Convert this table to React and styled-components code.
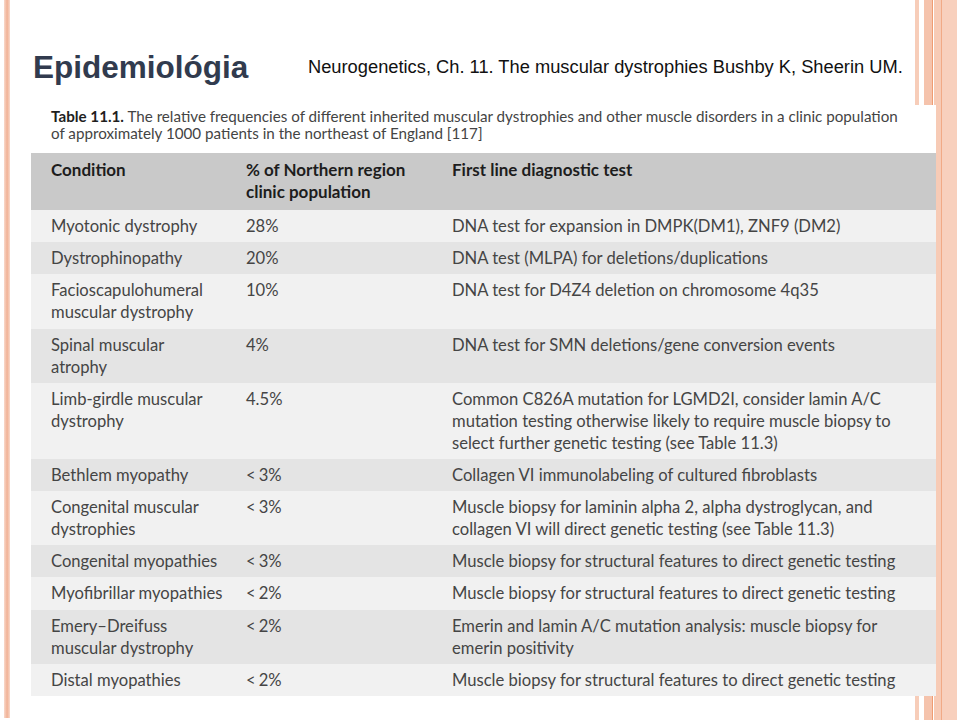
import React from 'react';
import styled, { createGlobalStyle } from 'styled-components';

const GlobalStyle = createGlobalStyle`
  html, body {
    margin: 0;
    padding: 0;
    background: #ffffff;
  }
`;

const Slide = styled.div`
  position: relative;
  width: 960px;
  height: 720px;
  overflow: hidden;
  background: #ffffff;
  display: flex;
  flex-direction: column;
`;

/* decorative frame lines of the slide template */
const LeftRule = styled.div`
  position: absolute;
  left: 4px;
  top: 0;
  width: 6px;
  height: 718px;
  background: linear-gradient(90deg, #f9d9cb 0%, #f2b79d 45%, #f2b79d 60%, #f9d9cb 100%);
`;

const Stripe = styled.div`
  position: absolute;
  top: 0;
  bottom: 0;
  left: ${({ $x }) => $x}px;
  width: ${({ $w }) => $w}px;
  background: ${({ $bg }) => $bg};
  border-right: ${({ $line }) => ($line ? `1px solid ${$line}` : 'none')};
`;

const Header = styled.header`
  position: relative;
  z-index: 1;
  box-sizing: border-box;
  height: 105px;
  padding: 51px 0 0 33px;
  display: grid;
  grid-template-columns: 275px auto;
  align-items: start;
`;

const Title = styled.h1`
  margin: 0;
  font-family: "Liberation Sans", Arial, sans-serif;
  font-weight: 700;
  font-size: 31.5px;
  line-height: 32px;
  color: #313b4e;
  white-space: nowrap;
`;

const Citation = styled.p`
  margin: 7px 0 0;
  font-family: "Liberation Sans", Arial, sans-serif;
  font-size: 18.3px;
  line-height: 18px;
  color: #111111;
  white-space: nowrap;
`;

const Figure = styled.figure`
  position: relative;
  z-index: 1;
  margin: 0 0 0 31px;
  width: 905px;
  background: #ffffff;
  padding-top: 3px;
  font-family: Lato, "Open Sans", sans-serif;
`;

const Caption = styled.figcaption`
  padding: 0 0 11px 20px;
  font-size: 15.2px;
  line-height: 17px;
  color: #444444;
  white-space: nowrap;

  b {
    color: #1f1f1f;
    font-weight: 700;
  }
`;

const Grid = styled.div`
  display: flex;
  flex-direction: column;
`;

const Row = styled.div`
  display: grid;
  grid-template-columns: 195px 206px 1fr;
  background: ${({ $tone }) =>
    $tone === 'head' ? '#c9c9c9' : $tone === 'dark' ? '#e4e4e4' : '#f1f1f1'};
  padding: ${({ $tone }) => ($tone === 'head' ? '6px 0 7px' : '5px 0')};
`;

const Cell = styled.div`
  padding-left: 20px;
  font-size: ${({ $head }) => ($head ? '17px' : '16.6px')};
  line-height: 22.1px;
  color: ${({ $head }) => ($head ? '#1d1d1d' : '#454545')};
  font-weight: ${({ $head }) => ($head ? 700 : 400)};
  white-space: nowrap;
`;

const Less = styled.span`
  margin-right: 3px;
`;

const Line = styled.div``;

const biopsy = 'Muscle biopsy for structural features to direct genetic testing';

const rows = [
  { cond: ['Myotonic dystrophy'], pct: '28%', test: ['DNA test for expansion in DMPK(DM1), ZNF9 (DM2)'] },
  { cond: ['Dystrophinopathy'], pct: '20%', test: ['DNA test (MLPA) for deletions/duplications'] },
  { cond: ['Facioscapulohumeral', 'muscular dystrophy'], pct: '10%', test: ['DNA test for D4Z4 deletion on chromosome 4q35'] },
  { cond: ['Spinal muscular', 'atrophy'], pct: '4%', test: ['DNA test for SMN deletions/gene conversion events'] },
  {
    cond: ['Limb-girdle muscular', 'dystrophy'],
    pct: '4.5%',
    test: [
      'Common C826A mutation for LGMD2I, consider lamin A/C',
      'mutation testing otherwise likely to require muscle biopsy to',
      'select further genetic testing (see Table 11.3)',
    ],
  },
  { cond: ['Bethlem myopathy'], pct: '<3%', test: ['Collagen VI immunolabeling of cultured fibroblasts'] },
  {
    cond: ['Congenital muscular', 'dystrophies'],
    pct: '<3%',
    test: [
      'Muscle biopsy for laminin alpha 2, alpha dystroglycan, and',
      'collagen VI will direct genetic testing (see Table 11.3)',
    ],
  },
  { cond: ['Congenital myopathies'], pct: '<3%', test: [biopsy] },
  { cond: ['Myofibrillar myopathies'], pct: '<2%', test: [biopsy] },
  {
    cond: ['Emery\u2013Dreifuss', 'muscular dystrophy'],
    pct: '<2%',
    test: ['Emerin and lamin A/C mutation analysis: muscle biopsy for', 'emerin positivity'],
  },
  { cond: ['Distal myopathies'], pct: '<2%', test: [biopsy] },
];

const Lines = ({ items }) => items.map((t, i) => <Line key={i}>{t}</Line>);

const Pct = ({ value }) =>
  value.startsWith('<') ? (
    <>
      <Less>&lt;</Less>
      {value.slice(1)}
    </>
  ) : (
    value
  );

export default function App() {
  return (
    <>
      <GlobalStyle />
      <Slide>
        <LeftRule />
        <Stripe $x={915} $w={4} $bg="#f7cdb9" />
        <Stripe $x={924} $w={8} $bg="#f5c3ac" $line="#ef9c72" />
        <Stripe $x={934} $w={7} $bg="#f7cbb6" $line="#f1aa86" />
        <Stripe $x={942} $w={15} $bg="#f8d0bd" />

        <Header>
          <Title>Epidemiológia</Title>
          <Citation>Neurogenetics, Ch. 11. The muscular dystrophies Bushby K, Sheerin UM.</Citation>
        </Header>

        <Figure>
          <Caption>
            <b>Table 11.1.</b> The relative frequencies of different inherited muscular dystrophies and other muscle disorders in a clinic population
            <br />
            of approximately 1000 patients in the northeast of England [117]
          </Caption>
          <Grid>
            <Row $tone="head">
              <Cell $head>Condition</Cell>
              <Cell $head>
                <Line>% of Northern region</Line>
                <Line>clinic population</Line>
              </Cell>
              <Cell $head>First line diagnostic test</Cell>
            </Row>
            {rows.map((r, i) => (
              <Row key={i} $tone={i % 2 ? 'dark' : 'light'}>
                <Cell><Lines items={r.cond} /></Cell>
                <Cell><Pct value={r.pct} /></Cell>
                <Cell><Lines items={r.test} /></Cell>
              </Row>
            ))}
          </Grid>
        </Figure>
      </Slide>
    </>
  );
}
